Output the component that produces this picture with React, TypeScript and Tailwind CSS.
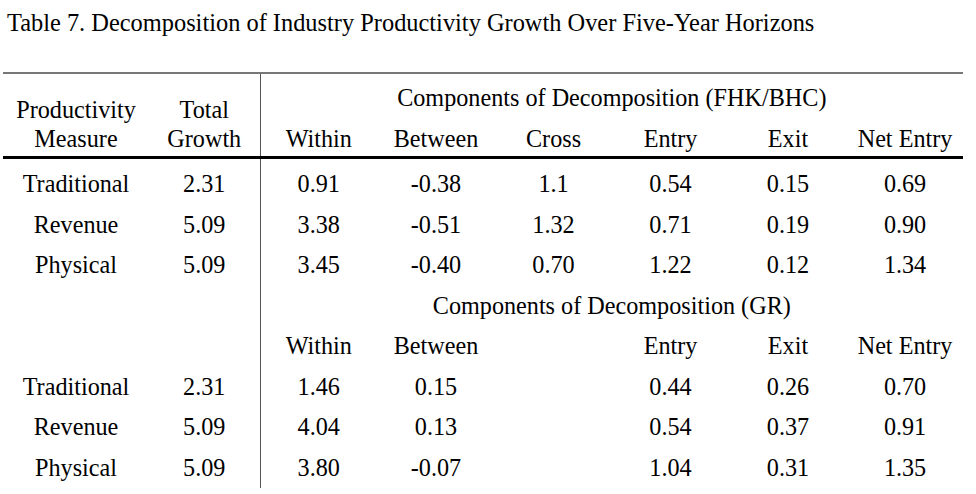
import React from 'react';

const subCols = ['Within', 'Between', 'Cross', 'Entry', 'Exit', 'Net Entry'];
const grCols = ['Within', 'Between', '', 'Entry', 'Exit', 'Net Entry'];

const fhkRows = [
  ['Traditional', '2.31', '0.91', '-0.38', '1.1', '0.54', '0.15', '0.69'],
  ['Revenue', '5.09', '3.38', '-0.51', '1.32', '0.71', '0.19', '0.90'],
  ['Physical', '5.09', '3.45', '-0.40', '0.70', '1.22', '0.12', '1.34'],
];

const grRows = [
  ['Traditional', '2.31', '1.46', '0.15', '', '0.44', '0.26', '0.70'],
  ['Revenue', '5.09', '4.04', '0.13', '', '0.54', '0.37', '0.91'],
  ['Physical', '5.09', '3.80', '-0.07', '', '1.04', '0.31', '1.35'],
];

const DataRow: React.FC<{ cells: string[]; first?: boolean }> = ({ cells, first }) => (
  <tr className="leading-[40.5px]">
    {cells.map((c, i) => (
      <td
        key={i}
        className={`p-0 text-center ${first ? 'pt-[5px]' : ''} ${i === 2 ? 'border-l border-[#555]' : ''}`}
      >
        {c}
      </td>
    ))}
  </tr>
);

const App: React.FC = () => {
  return (
    <div className="w-[976px] h-[494px] bg-white text-black overflow-hidden" style={{ fontFamily: '"Liberation Serif", "Times New Roman", serif' }}>
      <div className="pt-[9px] pl-[7px] text-[24.4px] leading-[28px]">
        Table 7. Decomposition of Industry Productivity Growth Over Five-Year Horizons
      </div>

      <table className="ml-[3px] mt-[35px] w-[960px] table-fixed text-[24.2px] border-t-2 border-[#777]">
        <colgroup>
          <col className="w-[146px]" />
          <col className="w-[111px]" />
          <col className="w-[117px]" />
          <col className="w-[118px]" />
          <col className="w-[117px]" />
          <col className="w-[117px]" />
          <col className="w-[118px]" />
          <col className="w-[116px]" />
        </colgroup>
        <thead>
          <tr>
            <th rowSpan={2} className="p-0 pb-[3px] font-normal align-bottom leading-[29px] border-b-[3px] border-black">
              Productivity
              <br />
              Measure
            </th>
            <th rowSpan={2} className="p-0 pb-[3px] font-normal align-bottom leading-[29px] border-b-[3px] border-black">
              Total
              <br />
              Growth
            </th>
            <th colSpan={6} className="p-0 pt-[4px] h-[46px] align-top font-normal leading-[40px] border-l border-[#555]">
              Components of Decomposition (FHK/BHC)
            </th>
          </tr>
          <tr>
            {subCols.map((c, i) => (
              <th
                key={c}
                className={`p-0 pt-[3px] font-normal leading-[34px] border-b-[3px] border-black ${i === 0 ? 'border-l border-l-[#555]' : ''}`}
              >
                {c}
              </th>
            ))}
          </tr>
        </thead>
        <tbody>
          {fhkRows.map((r, i) => (
            <DataRow key={r[0]} cells={r} first={i === 0} />
          ))}
          <tr className="leading-[40.5px]">
            <td className="p-0" />
            <td className="p-0" />
            <td colSpan={6} className="p-0 text-center border-l border-[#555]">
              Components of Decomposition (GR)
            </td>
          </tr>
          <tr className="leading-[40.5px]">
            <td className="p-0" />
            <td className="p-0" />
            {grCols.map((c, i) => (
              <td key={i} className={`p-0 text-center ${i === 0 ? 'border-l border-[#555]' : ''}`}>
                {c}
              </td>
            ))}
          </tr>
          {grRows.map((r) => (
            <DataRow key={r[0] + 'gr'} cells={r} />
          ))}
        </tbody>
      </table>
    </div>
  );
};

export default App;
